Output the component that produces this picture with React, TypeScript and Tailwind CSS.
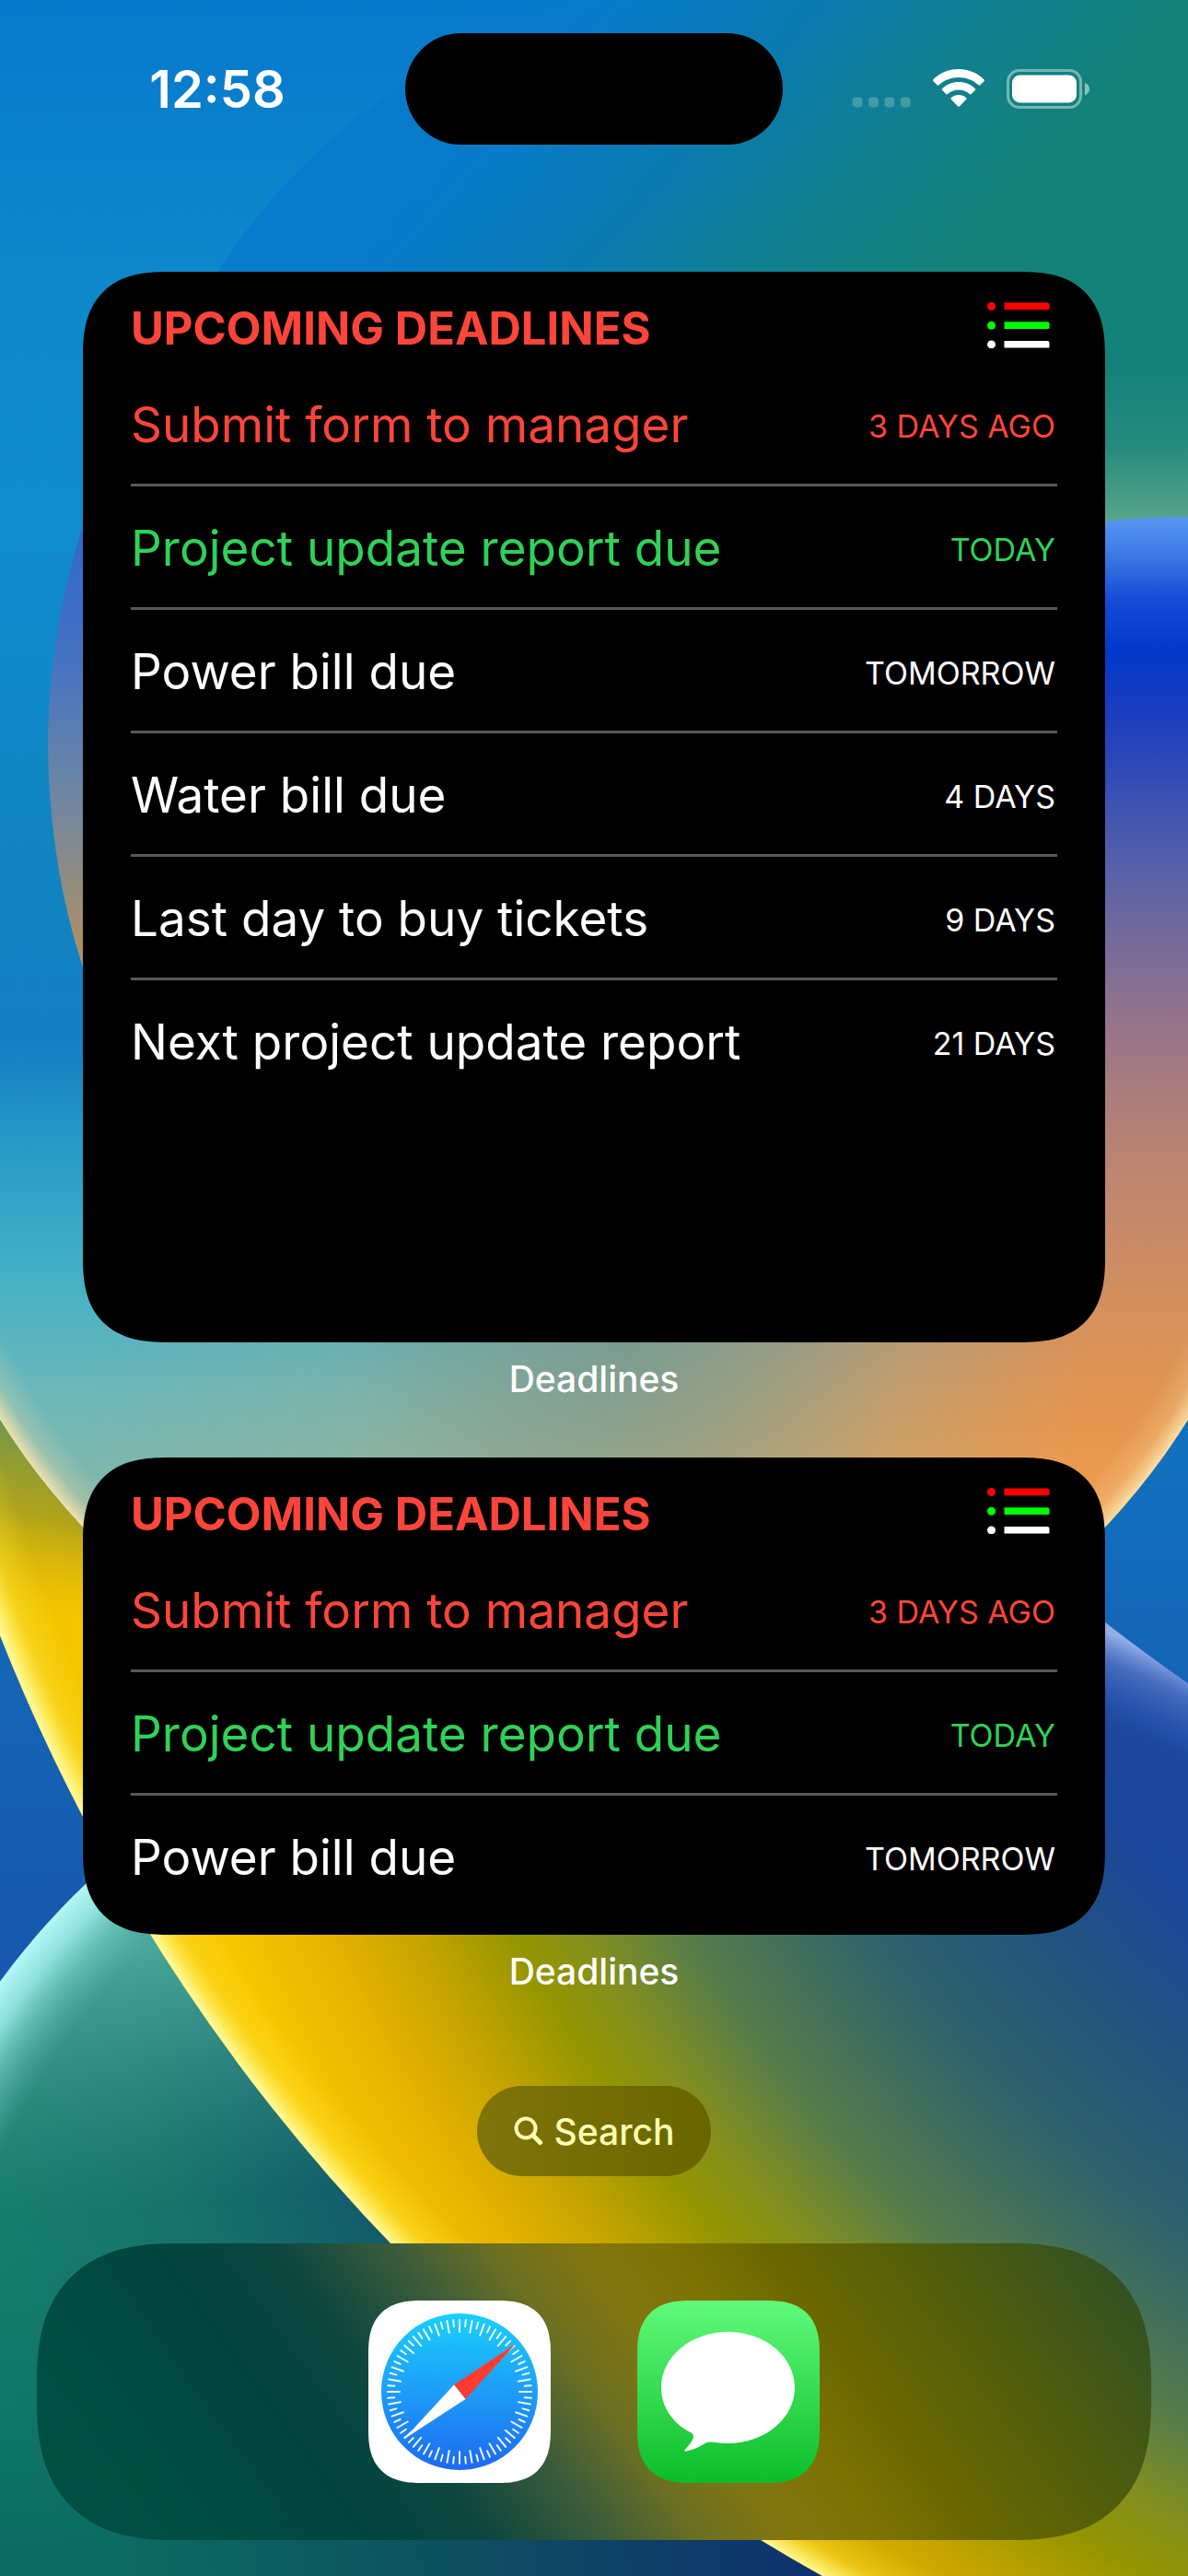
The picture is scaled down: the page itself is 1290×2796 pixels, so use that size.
type Tone = 'overdue' | 'today' | 'upcoming';

interface Deadline {
  title: string;
  when: string;
  tone: Tone;
}

const deadlines: Deadline[] = [
  { title: 'Submit form to manager', when: '3 DAYS AGO', tone: 'overdue' },
  { title: 'Project update report due', when: 'TODAY', tone: 'today' },
  { title: 'Power bill due', when: 'TOMORROW', tone: 'upcoming' },
  { title: 'Water bill due', when: '4 DAYS', tone: 'upcoming' },
  { title: 'Last day to buy tickets', when: '9 DAYS', tone: 'upcoming' },
  { title: 'Next project update report', when: '21 DAYS', tone: 'upcoming' },
];

const toneClass: Record<Tone, string> = {
  overdue: 'text-[#ff453a]',
  today: 'text-[#30d158]',
  upcoming: 'text-white',
};

function Wallpaper() {
  return (
    <svg
      aria-hidden="true"
      className="absolute inset-0 -z-10 h-full w-full"
      viewBox="0 0 1290 2796"
      preserveAspectRatio="none"
    >
      <defs>
        <linearGradient id="deep" gradientUnits="userSpaceOnUse" x1="0" y1="1541" x2="0" y2="2160">
          <stop offset="0" stopColor="#1172c0" />
          <stop offset="0.45" stopColor="#1564b6" />
          <stop offset="1" stopColor="#1856ae" />
        </linearGradient>
        <linearGradient id="sky" gradientUnits="userSpaceOnUse" x1="0" y1="0" x2="0" y2="1660">
          <stop offset="0" stopColor="#0779cd" />
          <stop offset="0.18" stopColor="#0e88cb" />
          <stop offset="0.35" stopColor="#108ccf" />
          <stop offset="0.56" stopColor="#1184c0" />
          <stop offset="0.68" stopColor="#127fc3" />
          <stop offset="0.75" stopColor="#279bc7" />
          <stop offset="0.83" stopColor="#43b0c7" />
          <stop offset="0.91" stopColor="#6cb8b9" />
          <stop offset="1" stopColor="#8ab8a8" />
        </linearGradient>
        <linearGradient id="canopy" gradientUnits="userSpaceOnUse" x1="330" y1="0" x2="950" y2="560">
          <stop offset="0" stopColor="#087bcd" />
          <stop offset="0.3" stopColor="#077bca" />
          <stop offset="0.5" stopColor="#0a7bb0" />
          <stop offset="0.66" stopColor="#107f92" />
          <stop offset="0.85" stopColor="#148279" />
          <stop offset="1" stopColor="#15827a" />
        </linearGradient>
        <linearGradient id="mint" gradientUnits="userSpaceOnUse" x1="0" y1="400" x2="0" y2="566">
          <stop offset="0" stopColor="#58a58a" stopOpacity="0" />
          <stop offset="0.5" stopColor="#58a58a" stopOpacity="0.25" />
          <stop offset="1" stopColor="#58a58a" />
        </linearGradient>
        <linearGradient id="lens" gradientUnits="userSpaceOnUse" x1="0" y1="570" x2="0" y2="1050">
          <stop offset="0" stopColor="#2f68ca" />
          <stop offset="0.3" stopColor="#4572c2" />
          <stop offset="0.6" stopColor="#6c86a4" />
          <stop offset="1" stopColor="#b5915f" />
        </linearGradient>
        <linearGradient id="dusk" gradientUnits="userSpaceOnUse" x1="0" y1="561" x2="0" y2="1700">
          <stop offset="0" stopColor="#5796f2" />
          <stop offset="0.04" stopColor="#3a76e4" />
          <stop offset="0.08" stopColor="#1549d6" />
          <stop offset="0.13" stopColor="#0337c8" />
          <stop offset="0.2" stopColor="#1e40bc" />
          <stop offset="0.34" stopColor="#5a62a8" />
          <stop offset="0.48" stopColor="#95738a" />
          <stop offset="0.6" stopColor="#b98373" />
          <stop offset="0.73" stopColor="#d08e60" />
          <stop offset="0.86" stopColor="#e5964f" />
          <stop offset="1" stopColor="#f4a352" />
        </linearGradient>
        <linearGradient id="duskFade" gradientUnits="userSpaceOnUse" x1="100" y1="1440" x2="1200" y2="1660">
          <stop offset="0" stopColor="#fff" stopOpacity="0" />
          <stop offset="0.25" stopColor="#fff" stopOpacity="0.12" />
          <stop offset="0.5" stopColor="#fff" stopOpacity="0.33" />
          <stop offset="0.72" stopColor="#fff" stopOpacity="0.66" />
          <stop offset="0.95" stopColor="#fff" />
        </linearGradient>
        <radialGradient id="smoke" gradientUnits="userSpaceOnUse" cx="680" cy="1460" r="300">
          <stop offset="0" stopColor="#6f8f86" stopOpacity="0.5" />
          <stop offset="1" stopColor="#6f8f86" stopOpacity="0" />
        </radialGradient>
        <radialGradient id="bowlRim" gradientUnits="userSpaceOnUse" cx="645" cy="1137" r="761">
          <stop offset="0.94" stopColor="#f6e3a4" stopOpacity="0" />
          <stop offset="0.975" stopColor="#f8dfa2" stopOpacity="0.25" />
          <stop offset="1" stopColor="#fbe6ae" stopOpacity="0.9" />
        </radialGradient>
        <radialGradient id="gold" gradientUnits="userSpaceOnUse" cx="2013" cy="1348" r="2030">
          <stop offset="0" stopColor="#1a449c" />
          <stop offset="0.5" stopColor="#1b479c" />
          <stop offset="0.565" stopColor="#22527f" />
          <stop offset="0.64" stopColor="#2e626c" />
          <stop offset="0.725" stopColor="#567c4a" />
          <stop offset="0.775" stopColor="#85901c" />
          <stop offset="0.806" stopColor="#939500" />
          <stop offset="0.855" stopColor="#c8a500" />
          <stop offset="0.9" stopColor="#e8b400" />
          <stop offset="0.95" stopColor="#f9c800" />
          <stop offset="1" stopColor="#f0c400" />
        </radialGradient>
        <radialGradient id="goldRim" gradientUnits="userSpaceOnUse" cx="1879" cy="1038" r="2015">
          <stop offset="0.97" stopColor="#ffe83c" stopOpacity="0" />
          <stop offset="0.987" stopColor="#ffe83c" stopOpacity="0.35" />
          <stop offset="0.995" stopColor="#fff168" stopOpacity="0.8" />
          <stop offset="1" stopColor="#fff894" />
        </radialGradient>
        <linearGradient id="moss" gradientUnits="userSpaceOnUse" x1="0" y1="1530" x2="-40" y2="1740">
          <stop offset="0" stopColor="#6c9550" />
          <stop offset="0.5" stopColor="#a59e1e" stopOpacity="0.85" />
          <stop offset="1" stopColor="#e2b408" stopOpacity="0" />
        </linearGradient>
        <linearGradient id="frost" gradientUnits="userSpaceOnUse" x1="1245" y1="1790" x2="1205" y2="1880">
          <stop offset="0" stopColor="#94aee8" />
          <stop offset="0.3" stopColor="#5077c8" stopOpacity="0.8" />
          <stop offset="0.7" stopColor="#2f5bb8" stopOpacity="0.5" />
          <stop offset="1" stopColor="#2450a8" stopOpacity="0" />
        </linearGradient>
        <linearGradient id="sea" gradientUnits="userSpaceOnUse" x1="-60" y1="2560" x2="480" y2="2350">
          <stop offset="0" stopColor="#16826c" />
          <stop offset="0.5" stopColor="#16746a" />
          <stop offset="1" stopColor="#10506a" />
        </linearGradient>
        <linearGradient id="seaHaze" gradientUnits="userSpaceOnUse" x1="100" y1="2120" x2="130" y2="2400">
          <stop offset="0" stopColor="#56b5a6" stopOpacity="0.8" />
          <stop offset="0.5" stopColor="#4aa898" stopOpacity="0.42" />
          <stop offset="1" stopColor="#3c9c88" stopOpacity="0" />
        </linearGradient>
        <linearGradient id="seaFloor" gradientUnits="userSpaceOnUse" x1="100" y1="2796" x2="900" y2="2750">
          <stop offset="0" stopColor="#0b6d62" />
          <stop offset="0.5" stopColor="#0d4f60" />
          <stop offset="1" stopColor="#0f3070" />
        </linearGradient>
        <linearGradient id="seaFloorFade" gradientUnits="userSpaceOnUse" x1="0" y1="2450" x2="0" y2="2760">
          <stop offset="0" stopColor="#fff" stopOpacity="0" />
          <stop offset="1" stopColor="#fff" />
        </linearGradient>
        <radialGradient id="seaRim" gradientUnits="userSpaceOnUse" cx="645" cy="2624" r="800">
          <stop offset="0.88" stopColor="#5fbfb4" stopOpacity="0" />
          <stop offset="0.93" stopColor="#7ed4cc" stopOpacity="0.5" />
          <stop offset="0.965" stopColor="#98e8e6" stopOpacity="0.9" />
          <stop offset="1" stopColor="#b4f8f6" />
        </radialGradient>
        <mask id="duskMask">
          <rect y="500" width="1290" height="1500" fill="url(#duskFade)" />
        </mask>
        <mask id="seaFloorMask">
          <rect y="2400" width="1290" height="396" fill="url(#seaFloorFade)" />
        </mask>
        <clipPath id="bowl">
          <path d="M0 0H1290V1541A761 761 0 0 1 0 1541Z" />
        </clipPath>
      </defs>

      <rect width="1290" height="2796" fill="url(#deep)" />

      <circle cx="645" cy="2624" r="800" fill="url(#sea)" />
      <circle cx="645" cy="2624" r="800" fill="url(#seaHaze)" />
      <rect y="2400" width="1000" height="396" fill="url(#seaFloor)" mask="url(#seaFloorMask)" />
      <circle cx="645" cy="2624" r="800" fill="url(#seaRim)" />

      <path
        d="M0 1400H700L1199 1760Q1245 1796 1290 1827V2796H893A2015 2015 0 0 1 0 1775Z"
        fill="url(#gold)"
      />
      <path d="M0 1400H300V1850H60L0 1775Z" fill="url(#moss)" />
      <path d="M1100 1690L1199 1760Q1245 1796 1290 1827V2000H1100Z" fill="url(#frost)" />
      <path
        d="M0 1400H500L1290 2700V2796H893A2015 2015 0 0 1 0 1775Z"
        fill="url(#goldRim)"
      />

      <g clipPath="url(#bowl)">
        <rect width="1290" height="1900" fill="url(#sky)" />
        <path d="M620 0Q370 90 236 295L180 700H1290V0Z" fill="url(#canopy)" />
        <rect x="1100" y="400" width="190" height="200" fill="url(#mint)" />
        <path d="M90 570Q52 690 52 812Q54 940 90 1050L300 1050V570Z" fill="url(#lens)" />
        <path
          d="M0 566H1199Q1240 561 1290 561V1900H0Z"
          fill="url(#dusk)"
          mask="url(#duskMask)"
        />
        <path d="M1190 567Q1240 561 1290 561V1457H1190Z" fill="url(#dusk)" />
        <rect x="300" y="1400" width="700" height="300" fill="url(#smoke)" />
        <path d="M0 1350H1290V1541A761 761 0 0 1 0 1541Z" fill="url(#bowlRim)" />
      </g>
    </svg>
  );
}

function StatusBar() {
  return (
    <header className="grid grid-cols-[1fr_410px_1fr] items-center pt-9 text-white">
      <time className="pl-8 text-center text-[56px] leading-none font-semibold">12:58</time>
      <div className="h-[121px] rounded-full bg-black" />
      <div className="flex items-end justify-center gap-6 pr-8">
        <svg className="mb-px h-3 w-16" viewBox="0 0 64 12" role="img" aria-label="No signal">
          {[0, 1, 2, 3].map((i) => (
            <rect key={i} x={0.5 + i * 17.4} y="0.5" width="11" height="11" rx="4" fill="#fff" fillOpacity="0.22" />
          ))}
        </svg>
        <svg className="mb-px h-[42px] w-14" viewBox="0 0 56 42" fill="#fff" role="img" aria-label="Wi-Fi">
          <path d="M28 0C38.400 0 48.400 4 55.500 11.200Q56.400 12.200 55.500 13.200L51.400 17.300Q50.500 18.100 49.600 17.300C43.700 11.800 36 8.900 28 8.900S12.300 11.800 6.400 17.300Q5.500 18.100 4.600 17.300L.500 13.200Q-.4 12.200.5 11.200C7.600 4 17.600 0 28 0Z" />
          <path d="M28 13.900C34.600 13.900 41 16.400 45.800 20.900Q46.800 21.900 45.800 22.900L41.700 27Q40.800 27.800 39.800 27C36.600 24.100 32.400 22.500 28 22.500S19.400 24.100 16.200 27Q15.200 27.800 14.300 27L10.200 22.900Q9.200 21.900 10.200 20.900C15 16.400 21.400 13.900 28 13.900Z" />
          <path d="M28 28C31 28 33.900 29.100 36.100 31Q37.100 32 36.100 33L29 40.200Q28 41.200 27 40.200L19.900 33Q18.900 32 19.900 31C22.100 29.100 25 28 28 28Z" />
        </svg>
        <svg className="h-[43px] w-[90px]" viewBox="0 0 90 43" role="img" aria-label="Battery full">
          <rect x="1.500" y="1.500" width="79" height="40" rx="12.500" fill="none" stroke="#fff" strokeOpacity="0.42" strokeWidth="3" />
          <rect x="6" y="6.500" width="70" height="30" rx="8.500" fill="#fff" />
          <path d="M85 15Q90 17 90 21.500T85 28.500Z" fill="#fff" fillOpacity="0.5" />
        </svg>
      </div>
    </header>
  );
}

function ListIcon() {
  return (
    <svg className="mr-2 mb-2 h-[50px] w-[68px]" viewBox="0 0 68 50" aria-hidden="true">
      {['#ff0000', '#00ff00', '#ffffff'].map((color, i) => (
        <g key={color} fill={color}>
          <circle cx="4.500" cy={4.5 + i * 20.7} r="4.500" />
          <path d={`M18.500 ${0.5 + i * 20.7}h47.500q1.500 1 1.500 2v4.500q0 1-1 1.200h-48z`} />
        </g>
      ))}
    </svg>
  );
}

interface DeadlinesWidgetProps {
  items: Deadline[];
  size: 'large' | 'medium';
}

function DeadlinesWidget({ items, size }: DeadlinesWidgetProps) {
  return (
    <figure className="mx-[90px]">
      <section
        className={`rounded-[74px] bg-black px-[52px] supports-[corner-shape:squircle]:rounded-[92px] supports-[corner-shape:squircle]:[corner-shape:superellipse(1.35)] ${
          size === 'large' ? 'min-h-[1162px]' : 'min-h-[518px]'
        }`}
      >
        <div className="flex h-[99px] items-center justify-between pt-6">
          <h2 className="text-[49px] leading-none font-bold text-[#ff453a]">UPCOMING DEADLINES</h2>
          <ListIcon />
        </div>
        <ul>
          {items.map((item) => (
            <li
              key={item.title}
              className={`flex h-[134px] items-center justify-between border-b-3 border-[#58585c] pt-1 last:border-transparent ${toneClass[item.tone]}`}
            >
              <span className="text-[53px] leading-none">{item.title}</span>
              <span className="pt-0.5 pr-0.5 text-[34px] leading-none">{item.when}</span>
            </li>
          ))}
        </ul>
      </section>
      <figcaption className="mt-4 text-center text-[39px] leading-[48px] font-medium text-white">
        Deadlines
      </figcaption>
    </figure>
  );
}

function SafariIcon() {
  return (
    <svg className="size-full" viewBox="0 0 198 198" aria-hidden="true">
      <defs>
        <linearGradient id="dial" x1="0" y1="0" x2="0" y2="1">
          <stop offset="0" stopColor="#19d0fd" />
          <stop offset="0.5" stopColor="#1d9df7" />
          <stop offset="1" stopColor="#1e69f1" />
        </linearGradient>
      </defs>
      <rect width="198" height="198" fill="#fff" />
      <circle cx="99" cy="99" r="85" fill="url(#dial)" />
      {Array.from({ length: 72 }, (_, i) => (
        <path
          key={i}
          d={i % 2 === 0 ? 'M99 21V34' : 'M99 21V28'}
          stroke="#fff"
          strokeOpacity="0.92"
          strokeWidth="2"
          strokeLinecap="round"
          transform={`rotate(${i * 5} 99 99)`}
        />
      ))}
      <path d="M160 47L93 91.500L105.500 107Z" fill="#ff3b30" />
      <path d="M38.500 150.500L93 91.500L105.500 107Z" fill="#fff" />
    </svg>
  );
}

function MessagesIcon() {
  return (
    <svg className="size-full" viewBox="0 0 198 198" aria-hidden="true">
      <defs>
        <linearGradient id="leaf" x1="0" y1="0" x2="0" y2="1">
          <stop offset="0" stopColor="#61fa7b" />
          <stop offset="1" stopColor="#0bbd29" />
        </linearGradient>
      </defs>
      <rect width="198" height="198" fill="url(#leaf)" />
      <path
        fill="#fff"
        d="M98.500 34C138.500 34 171 61 171 94.500S138.500 155 98.500 155Q91 155 83 153.800Q78 152.800 74 154.800Q63 162 52.500 163.700Q50.500 163.500 52 161.500Q58.500 155.500 61 148.500Q61.500 145.500 59 143.800C38 133.500 26 115 26 94.500C26 61 58.500 34 98.500 34Z"
      />
    </svg>
  );
}

const appIconClass =
  'size-[198px] overflow-hidden rounded-[46px] supports-[corner-shape:squircle]:rounded-[58px] supports-[corner-shape:squircle]:[corner-shape:superellipse(1.35)]';

export default function App() {
  return (
    <main className="relative isolate flex min-h-screen flex-col overflow-hidden font-['Inter',sans-serif]">
      <Wallpaper />
      <StatusBar />
      <div className="mt-[138px] flex flex-col gap-[61px]">
        <DeadlinesWidget items={deadlines} size="large" />
        <DeadlinesWidget items={deadlines.slice(0, 3)} size="medium" />
      </div>
      <button
        type="button"
        className="mx-auto mt-[100px] flex h-[98px] items-center gap-3 rounded-full bg-linear-to-r from-[#80740a] to-[#686600] px-10 text-[39px] leading-none font-medium text-[#ffffb0]"
      >
        <svg className="size-8" viewBox="0 0 32 32" fill="none" stroke="currentColor" strokeLinecap="round" aria-hidden="true">
          <circle cx="13" cy="13" r="10.500" strokeWidth="4" />
          <path d="M21 21L28.500 28.500" strokeWidth="5" />
        </svg>
        Search
      </button>
      <nav
        aria-label="Dock"
        className="mx-10 mt-[73px] mb-[39px] flex h-[322px] items-center justify-center gap-[94px] rounded-[124px] bg-[linear-gradient(54deg,#005044_0%,#004f42_10%,#02453f_25%,#0c463f_34%,#3c5c3a_43%,#6b6f22_50%,#837610_57%,#7c7203_64%,#6a6700_71%,#505d0c_83%,#335122_96%)] supports-[corner-shape:squircle]:rounded-[150px] supports-[corner-shape:squircle]:[corner-shape:superellipse(1.3)]"
      >
        <button type="button" aria-label="Safari" className={appIconClass}>
          <SafariIcon />
        </button>
        <button type="button" aria-label="Messages" className={appIconClass}>
          <MessagesIcon />
        </button>
      </nav>
    </main>
  );
}
